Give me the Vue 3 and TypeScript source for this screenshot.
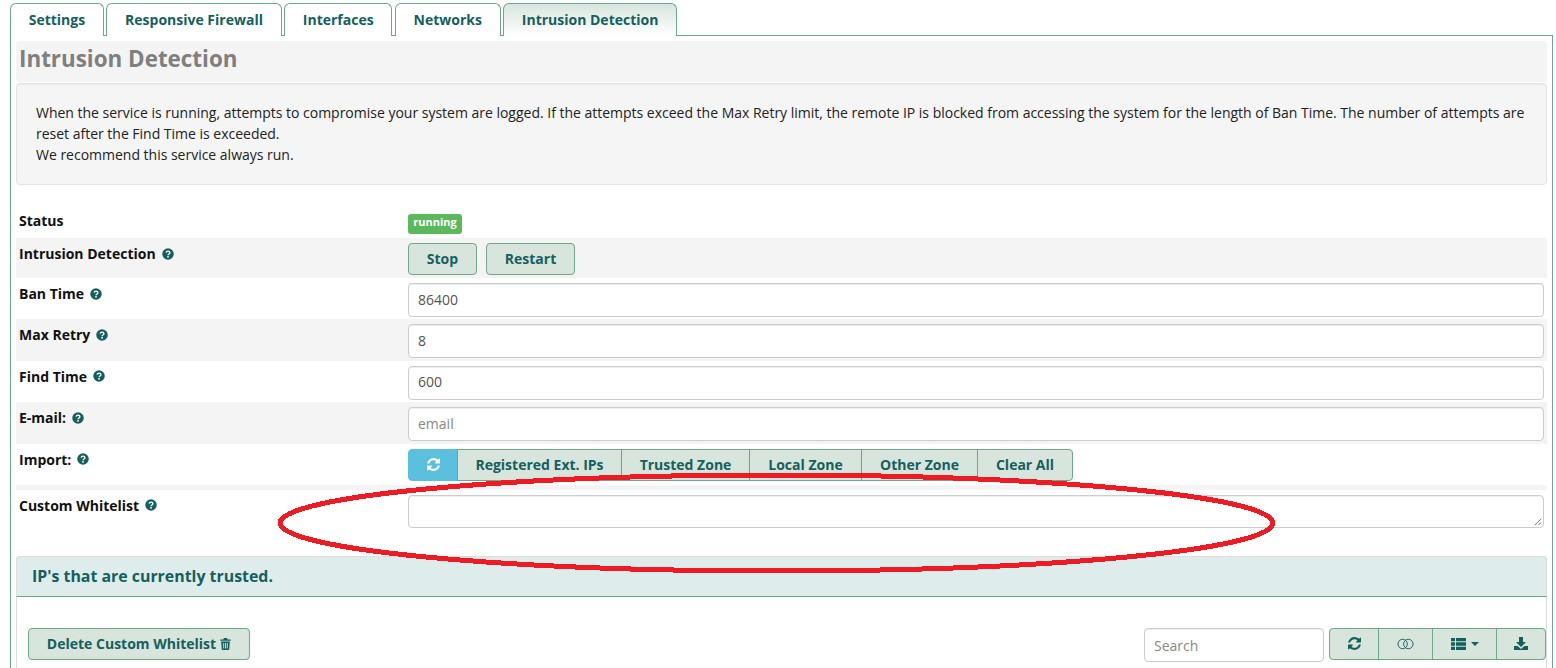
<template>
  <div class="page">
    <nav class="tabs">
      <a v-for="tab in tabs" :key="tab" class="tab" :class="{ active: tab === 'Intrusion Detection' }">{{ tab }}</a>
    </nav>

    <div class="content">
      <h2 class="title">Intrusion Detection</h2>
      <div class="well">
        When the service is running, attempts to compromise your system are logged. If the attempts exceed the Max Retry limit, the remote IP is blocked from accessing the system for the length of Ban Time. The number of attempts are reset after the Find Time is exceeded.<br />
        We recommend this service always run.
      </div>

      <div class="row status-row">
        <label>Status</label>
        <div><span class="badge">running</span></div>
      </div>

      <div class="row grey btn-row">
        <label>Intrusion Detection <svg class="help" viewBox="0 0 24 24"><use href="#q" /></svg></label>
        <div class="buttons">
          <button class="btn stop">Stop</button>
          <button class="btn restart">Restart</button>
        </div>
      </div>

      <div v-for="(f, i) in fields" :key="f.label" class="row field-row" :class="{ grey: i % 2 === 1 }">
        <label>{{ f.label }} <svg class="help" viewBox="0 0 24 24"><use href="#q" /></svg></label>
        <input class="input" :value="f.value" :placeholder="f.placeholder" />
      </div>

      <div class="row import-row">
        <label>Import: <svg class="help" viewBox="0 0 24 24"><use href="#q" /></svg></label>
        <div class="group">
          <button class="seg info">
            <svg class="ico" viewBox="0 0 1536 1536"><use href="#refresh" /></svg>
          </button>
          <button v-for="z in zones" :key="z.name" class="seg" :style="{ width: z.w + 'px' }">{{ z.name }}</button>
        </div>
      </div>

      <div class="row whitelist-row">
        <label>Custom Whitelist <svg class="help" viewBox="0 0 24 24"><use href="#q" /></svg></label>
        <div class="area-wrap">
          <textarea class="input area"></textarea>
          <svg class="grip" viewBox="0 0 10 10"><path d="M9 2 2 9M9 6 6 9" /></svg>
        </div>
      </div>

      <section class="panel">
        <header class="panel-head">IP's that are currently trusted.</header>
        <div class="toolbar">
          <button class="btn delete">
            Delete Custom Whitelist
            <svg class="trash" viewBox="0 0 14 16"><path d="M5 0h4l1 2h4v1.5H0V2h4zM1.2 4.500h11.600L12 15a1 1 0 0 1-1 1H3a1 1 0 0 1-1-1zM4 6.500v7.500h1.200V6.500zm2.400 0v7.500h1.200V6.500zm2.400 0v7.500H10V6.500z" fill-rule="evenodd" /></svg>
          </button>
          <div class="tools">
            <input class="input search" placeholder="Search" />
            <div class="group small">
              <button class="seg" style="width: 50px">
                <svg class="ico" viewBox="0 0 1536 1536"><use href="#refresh" /></svg>
              </button>
              <button class="seg" style="width: 55px">
                <svg class="toggle" viewBox="0 0 18 12"><circle cx="6" cy="6" r="5" /><circle cx="12" cy="6" r="5" /></svg>
              </button>
              <button class="seg" style="width: 65px">
                <svg class="list" viewBox="0 0 15 12"><path d="M0 0h4v3.300H0zM5 0h10v3.300H5zM0 4.350h4v3.300H0zM5 4.350h10v3.300H5zM0 8.700h4V12H0zM5 8.700h10V12H5z" /></svg>
                <span class="caret"></span>
              </button>
              <button class="seg" style="width: 50px">
                <svg class="dl" viewBox="0 0 14 13"><path d="M5 0h4v5h3L7 10 2 5h3zM0 9h3.500L7 12l3.500-3H14v4H0z" /></svg>
              </button>
            </div>
          </div>
        </div>
      </section>
    </div>

    <!-- red marker drawn over the screenshot -->
    <svg class="marker" viewBox="0 0 1556 668">
      <ellipse cx="776.500" cy="523" rx="496.500" ry="48" />
    </svg>

    <svg width="0" height="0" style="position: absolute">
      <defs>
        <g id="q">
          <circle cx="12" cy="12" r="11.500" fill="currentColor" />
          <path d="M8.300 9.300c.4-2 1.900-3 3.800-3 2.200 0 3.700 1.300 3.700 3 0 2.800-3.800 2.600-3.800 5.300" fill="none" stroke="#fff" stroke-width="2.800" />
          <rect x="10.400" y="16.200" width="3.200" height="3" fill="#fff" />
        </g>
        <path id="refresh" d="M1511 928q0 5-1 7-64 268-268 434.500t-478 166.500q-146 0-282.500-55t-243.500-157l-129 129q-19 19-45 19t-45-19-19-45v-448q0-26 19-45t45-19h448q26 0 45 19t19 45-19 45l-137 137q71 66 161 102t187 36q134 0 250-65t186-179q11-17 53-117 8-23 30-23h192q13 0 22.500 9.500t9.500 22.500zm25-800v448q0 26-19 45t-45 19h-448q-26 0-45-19t-19-45 19-45l138-138q-148-137-349-137-134 0-250 65t-186 179q-11 17-53 117-8 23-30 23h-199q-13 0-22.500-9.500t-9.500-22.500v-7q65-268 270-434.500t480-166.500q146 0 284 55.500t245 156.500l130-129q19-19 45-19t45 19 19 45z" />
      </defs>
    </svg>
  </div>
</template>

<script setup lang="ts">
const tabs = ['Settings', 'Responsive Firewall', 'Interfaces', 'Networks', 'Intrusion Detection']

const fields = [
  { label: 'Ban Time', value: '86400', placeholder: '' },
  { label: 'Max Retry', value: '8', placeholder: '' },
  { label: 'Find Time', value: '600', placeholder: '' },
  { label: 'E-mail:', value: '', placeholder: 'email' },
]

const zones = [
  { name: 'Registered Ext. IPs', w: 165 },
  { name: 'Trusted Zone', w: 129 },
  { name: 'Local Zone', w: 113 },
  { name: 'Other Zone', w: 117 },
  { name: 'Clear All', w: 96 },
]
</script>

<style>
html,
body {
  margin: 0;
  background: #fff;
  overflow: hidden;
}
</style>

<style scoped>
.page {
  position: relative;
  width: 1556px;
  height: 668px;
  overflow: hidden;
  box-sizing: border-box;
  padding: 3px 3px 0 10px;
  font-family: 'Open Sans', 'Noto Sans', sans-serif;
  font-size: 14px;
  line-height: 21px;
  color: #333;
}

.tabs {
  display: flex;
  gap: 2.5px;
  position: relative;
  z-index: 1;
  height: 33px;
}

.tab {
  box-sizing: border-box;
  height: 33px;
  padding: 5px 17.7px 0;
  border: 1px solid #6fa78a;
  border-bottom: 0;
  border-radius: 6px 6px 0 0;
  background: #fff;
  color: #155f5f;
  font-weight: 700;
}

.tab.active {
  background: linear-gradient(#d7e5dd, #fff);
}

.content {
  box-sizing: border-box;
  height: 640px;
  margin-top: -1px;
  padding: 5px 5px 0;
  border: 1px solid #6fa78a;
  border-bottom: 0;
}

.title {
  height: 41px;
  margin: 0 0 1px;
  padding: 0 3px;
  background: #f4f4f4;
  border-radius: 4px;
  color: #7f7f7f;
  font-size: 22.4px;
  font-weight: 700;
  line-height: 36px;
}

.well {
  box-sizing: border-box;
  height: 102px;
  margin-bottom: 20px;
  padding: 18px 19px 19px;
  background: #f5f5f5;
  border: 1px solid #e3e3e3;
  border-radius: 4px;
  box-shadow: inset 0 1px 1px rgba(0, 0, 0, 0.05);
  color: #222;
  letter-spacing: -0.01px;
}

.row {
  display: grid;
  grid-template-columns: 389px 1fr;
  padding: 5px 3px 3px;
}

.row.grey {
  background: #f4f4f4;
}

.row label {
  display: flex;
  align-items: center;
  gap: 6px;
  height: 21px;
  color: #111;
  font-weight: 700;
}

.status-row {
  height: 33px;
  box-sizing: border-box;
}

.status-row label {
  margin-top: -0.5px;
}

.btn-row {
  height: 40px;
  box-sizing: border-box;
}

.field-row {
  height: 41.4px;
  box-sizing: border-box;
}

.import-row {
  height: 41.4px;
  box-sizing: border-box;
}

.whitelist-row {
  border-top: 5px solid #f4f4f4;
  padding-bottom: 0;
}

.help {
  width: 12px;
  height: 12px;
  color: #155f5f;
  flex: none;
}

.badge {
  display: inline-block;
  box-sizing: border-box;
  width: 54px;
  height: 20px;
  margin-top: 2px;
  background: #5cb85c;
  border-radius: 3px;
  color: #fff;
  font-size: 11px;
  font-weight: 700;
  line-height: 15px;
  text-align: center;
}

.buttons {
  display: flex;
  gap: 9px;
}

.btn {
  box-sizing: border-box;
  height: 32px;
  background: #d7e5dd;
  border: 1px solid #6fa78a;
  border-radius: 4px;
  color: #155f5f;
  font: 700 14px/20px 'Open Sans', 'Noto Sans', sans-serif;
  padding: 0;
}

.stop {
  width: 69px;
}

.restart {
  width: 89px;
}

.input {
  display: block;
  box-sizing: border-box;
  width: 100%;
  height: 34px;
  padding: 5px 9px 7px;
  background: #fff;
  border: 1px solid #ccc;
  border-radius: 4px;
  box-shadow: inset 0 1px 1px rgba(0, 0, 0, 0.075);
  color: #555;
  font: 14px/20px 'Open Sans', 'Noto Sans', sans-serif;
  outline: none;
}

.input::placeholder {
  color: #888;
  opacity: 1;
}

.group {
  display: inline-flex;
  height: 32px;
  width: max-content;
}

.seg {
  box-sizing: border-box;
  height: 32px;
  margin-left: -1px;
  padding: 0;
  background: #d7e5dd;
  border: 1px solid #6fa78a;
  color: #155f5f;
  font: 700 14px/20px 'Open Sans', 'Noto Sans', sans-serif;
  display: flex;
  align-items: center;
  justify-content: center;
}

.seg:first-child {
  margin-left: 0;
  border-radius: 4px 0 0 4px;
}

.seg:last-child {
  border-radius: 0 4px 4px 0;
}

.seg.info {
  width: 50px;
  background: #5bc0de;
  border-color: #5bc0de;
  color: #fff;
}

.ico {
  width: 13px;
  height: 13px;
  fill: currentColor;
}

.area-wrap {
  position: relative;
  height: 33px;
}

.area {
  height: 33px;
  resize: none;
}

.grip {
  position: absolute;
  right: 2px;
  bottom: 2px;
  width: 9px;
  height: 9px;
  fill: none;
  stroke: #666;
  stroke-width: 1;
}

.panel {
  box-sizing: border-box;
  height: 120px;
  margin-top: 28px;
  border: 1px solid #ddd;
  border-bottom: 0;
  border-radius: 4px 4px 0 0;
}

.panel-head {
  box-sizing: border-box;
  height: 41px;
  margin: -1px -1px 0;
  padding: 7px 15px;
  background: #deecec;
  border: 1px solid #ddd;
  border-bottom: 1px solid #6fa78a;
  border-radius: 4px 4px 0 0;
  color: #155f5f;
  font-size: 15.9px;
  font-weight: 700;
  line-height: 24px;
}

.toolbar {
  display: flex;
  justify-content: space-between;
  align-items: flex-start;
  padding: 31px 0 0 11px;
}

.delete {
  width: 222px;
  display: flex;
  align-items: center;
  justify-content: center;
  gap: 4px;
}

.trash {
  width: 11px;
  height: 12px;
  fill: currentColor;
}

.tools {
  display: flex;
  gap: 5px;
}

.search {
  width: 180px;
  padding-top: 7px;
  padding-bottom: 5px;
}

.toggle {
  width: 17px;
  height: 12px;
  fill: none;
  stroke: currentColor;
  stroke-width: 1;
}

.list {
  width: 15px;
  height: 12px;
  fill: currentColor;
}

.caret {
  width: 0;
  height: 0;
  margin-left: 5px;
  border-top: 4px solid currentColor;
  border-left: 4px solid transparent;
  border-right: 4px solid transparent;
}

.dl {
  width: 14px;
  height: 13px;
  fill: currentColor;
}

.marker {
  position: absolute;
  left: 0;
  top: 0;
  width: 1556px;
  height: 668px;
  z-index: 2;
  pointer-events: none;
  fill: none;
  stroke: #ed1c24;
  stroke-width: 5;
  shape-rendering: crispEdges;
}
</style>
